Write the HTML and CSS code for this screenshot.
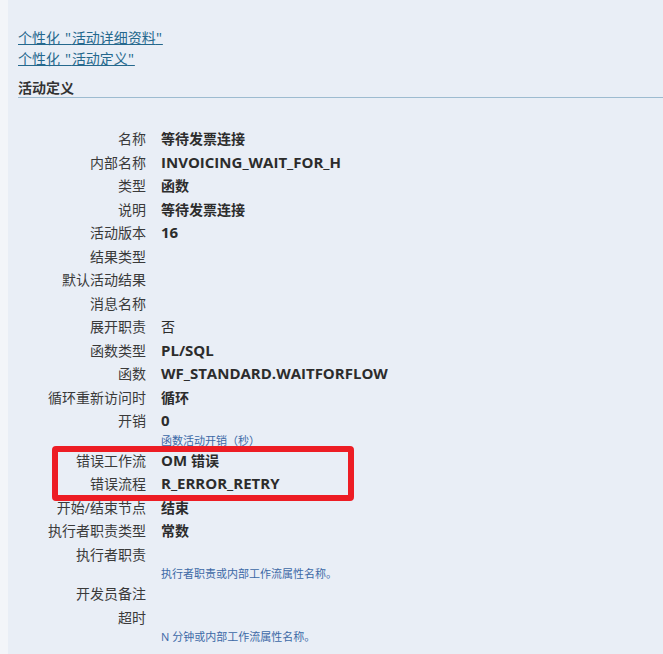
FILE: index.html
```html
<!DOCTYPE html>
<html lang="zh-CN">
<head>
<meta charset="utf-8">
<title>活动定义</title>
<link rel="stylesheet" href="styles.css">
</head>
<body>
<div class="page">
  <div class="links">
    <a href="#" class="plink">个性化<span class="lq"> "</span>活动详细资料<span class="lq">"</span></a>
    <a href="#" class="plink">个性化<span class="lq"> "</span>活动定义<span class="lq">"</span></a>
  </div>
  <h2 class="section-title">活动定义</h2>
  <div class="fields">
    <div class="row"><span class="label">名称</span><span class="value">等待发票连接</span></div>
    <div class="row"><span class="label">内部名称</span><span class="value latin">INVOICING_WAIT_FOR_H</span></div>
    <div class="row"><span class="label">类型</span><span class="value">函数</span></div>
    <div class="row"><span class="label">说明</span><span class="value">等待发票连接</span></div>
    <div class="row"><span class="label">活动版本</span><span class="value latin">16</span></div>
    <div class="row"><span class="label">结果类型</span><span class="value"></span></div>
    <div class="row"><span class="label">默认活动结果</span><span class="value"></span></div>
    <div class="row"><span class="label">消息名称</span><span class="value"></span></div>
    <div class="row"><span class="label">展开职责</span><span class="value plain">否</span></div>
    <div class="row"><span class="label">函数类型</span><span class="value latin">PL/SQL</span></div>
    <div class="row"><span class="label">函数</span><span class="value latin">WF_STANDARD.WAITFORFLOW</span></div>
    <div class="row"><span class="label">循环重新访问时</span><span class="value">循环</span></div>
    <div class="row"><span class="label">开销</span><span class="value latin">0</span></div>
    <div class="row hint-row"><span></span><span class="hint">函数活动开销（秒）</span></div>
    <div class="highlight-group">
      <div class="row"><span class="label">错误工作流</span><span class="value"><span class="latin">OM </span>错误</span></div>
      <div class="row"><span class="label">错误流程</span><span class="value latin">R_ERROR_RETRY</span></div>
      <div class="annotation"></div>
    </div>
    <div class="row"><span class="label">开始/结束节点</span><span class="value">结束</span></div>
    <div class="row"><span class="label">执行者职责类型</span><span class="value">常数</span></div>
    <div class="row"><span class="label">执行者职责</span><span class="value"></span></div>
    <div class="row hint-row"><span></span><span class="hint">执行者职责或内部工作流属性名称。</span></div>
    <div class="row"><span class="label">开发员备注</span><span class="value"></span></div>
    <div class="row"><span class="label">超时</span><span class="value"></span></div>
    <div class="row hint-row"><span></span><span class="hint">N 分钟或内部工作流属性名称。</span></div>
  </div>
</div>
</body>
</html>
```
FILE: styles.css
```css
html, body {
  margin: 0;
  padding: 0;
}
body {
  background: #f3f5f9;
  font-family: "Open Sans", "Noto Sans CJK SC", sans-serif;
  font-size: 14px;
  color: #333;
}
.page {
  margin-left: 8px;
  background: #e9eef6;
  min-height: 654px;
  padding: 27px 0 0 10px;
  box-sizing: border-box;
}
.links {
  display: flex;
  flex-direction: column;
  align-items: flex-start;
}
.plink {
  color: #25688d;
  text-decoration: underline;
  line-height: 21px;
  font-size: 14px;
}
.lq {
  font-size: 15px;
  letter-spacing: 1px;
}
.section-title {
  margin: 10px 0 0 0;
  font-size: 14px;
  font-weight: bold;
  line-height: 18px;
  color: #333;
  border-bottom: 1px solid #9dbbd0;
}
.fields {
  margin-top: 29px;
}
.row {
  display: grid;
  grid-template-columns: 128px 1fr;
  column-gap: 15px;
  line-height: 23.5px;
  height: 23.5px;
}
.label {
  text-align: right;
  color: #3a3a3a;
  white-space: nowrap;
}
.value {
  font-weight: bold;
  color: #2c2c2c;
  white-space: nowrap;
}
.latin {
  font-size: 15px;
}
.value.plain {
  font-weight: normal;
}
.hint-row {
  height: 16px;
  line-height: 16px;
}
.hint {
  font-size: 11px;
  color: #3c69a6;
  white-space: nowrap;
}
.highlight-group {
  position: relative;
}
.annotation {
  position: absolute;
  left: 34px;
  top: -3px;
  width: 302px;
  height: 55px;
  box-sizing: border-box;
  border: 6px solid #ed1c24;
  border-radius: 4px;
}
```
